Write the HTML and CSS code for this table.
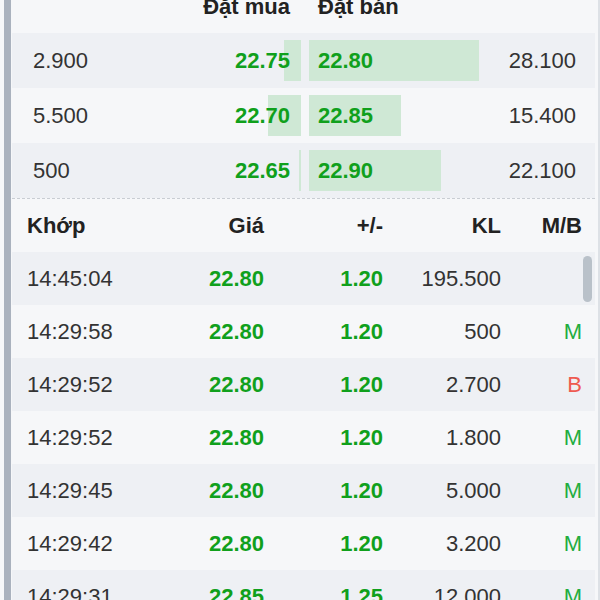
FILE: index.html
```html
<!DOCTYPE html>
<html lang="vi">
<head>
  <meta charset="UTF-8">
  <meta name="viewport" content="width=device-width, initial-scale=1.0">
  <title>Sổ lệnh và khớp lệnh</title>
  <link rel="stylesheet" href="styles.css">
</head>
<body>
  <div class="panel">
    <!-- Order book -->
    <div class="book">
      <div class="book-head">
        <div></div>
        <div class="buy">Đặt mua</div>
        <div class="sell">Đặt bán</div>
        <div></div>
      </div>

      <div class="book-row">
        <div class="vol-left">2.900</div>
        <div class="buy"><span class="bar" style="width: 17px"></span><span class="price">22.75</span></div>
        <div class="sell"><span class="bar" style="width: 170px"></span><span class="price">22.80</span></div>
        <div class="vol-right">28.100</div>
      </div>

      <div class="book-row">
        <div class="vol-left">5.500</div>
        <div class="buy"><span class="bar" style="width: 33px"></span><span class="price">22.70</span></div>
        <div class="sell"><span class="bar" style="width: 92px"></span><span class="price">22.85</span></div>
        <div class="vol-right">15.400</div>
      </div>

      <div class="book-row">
        <div class="vol-left">500</div>
        <div class="buy"><span class="bar" style="width: 2px"></span><span class="price">22.65</span></div>
        <div class="sell"><span class="bar" style="width: 132px"></span><span class="price">22.90</span></div>
        <div class="vol-right">22.100</div>
      </div>
    </div>

    <!-- Matched trades -->
    <div class="trades">
      <div class="trade-head">
        <div class="time">Khớp</div>
        <div>Giá</div>
        <div>+/-</div>
        <div>KL</div>
        <div>M/B</div>
      </div>

      <div class="trade-list">
        <div class="thumb"></div>

        <div class="trade-row">
          <div class="time">14:45:04</div>
          <div class="up">22.80</div>
          <div class="up">1.20</div>
          <div>195.500</div>
          <div></div>
        </div>
        <div class="trade-row">
          <div class="time">14:29:58</div>
          <div class="up">22.80</div>
          <div class="up">1.20</div>
          <div>500</div>
          <div class="side-m">M</div>
        </div>
        <div class="trade-row">
          <div class="time">14:29:52</div>
          <div class="up">22.80</div>
          <div class="up">1.20</div>
          <div>2.700</div>
          <div class="side-b">B</div>
        </div>
        <div class="trade-row">
          <div class="time">14:29:52</div>
          <div class="up">22.80</div>
          <div class="up">1.20</div>
          <div>1.800</div>
          <div class="side-m">M</div>
        </div>
        <div class="trade-row">
          <div class="time">14:29:45</div>
          <div class="up">22.80</div>
          <div class="up">1.20</div>
          <div>5.000</div>
          <div class="side-m">M</div>
        </div>
        <div class="trade-row">
          <div class="time">14:29:42</div>
          <div class="up">22.80</div>
          <div class="up">1.20</div>
          <div>3.200</div>
          <div class="side-m">M</div>
        </div>
        <div class="trade-row">
          <div class="time">14:29:31</div>
          <div class="up">22.85</div>
          <div class="up">1.25</div>
          <div>12.000</div>
          <div class="side-m">M</div>
        </div>
      </div>
    </div>
  </div>
</body>
</html>
```

FILE: styles.css
```css
html, body {
  height: 100%;
  overflow: hidden;
}

body {
  margin: 0;
  background-color: #f6f7f9;
  font-family: "Liberation Sans", Arial, sans-serif;
  font-size: 22px;
  color: #333;
  border-right: 2px solid #dde1e6;
  box-sizing: border-box;
}

.panel {
  margin: -20px 3px 0 4px;
  border-left: 7px solid #aab2be;
  padding-left: 1px;
  background-color: #f6f7f9;
}

/* Order book */
.book-head,
.book-row {
  display: grid;
  grid-template-columns: 148px 141px 194px 100px;
}

.book-head {
  height: 53px;
  align-items: center;
  font-weight: bold;
  color: #222;
}

.book-head .buy {
  text-align: right;
  padding-right: 11px;
}

.book-head .sell {
  padding-left: 17px;
}

.book-row {
  height: 55px;
  align-items: center;
}

.book-row:nth-child(even) {
  background-color: #eef0f4;
}

.book-row .buy,
.book-row .sell {
  position: relative;
  height: 41px;
  display: flex;
  align-items: center;
}

.book-row .buy {
  justify-content: flex-end;
  padding-right: 11px;
}

.book-row .sell {
  margin-left: 8px;
  padding-left: 9px;
}

.bar {
  position: absolute;
  top: 0;
  bottom: 0;
  background-color: #cfe8d5;
}

.buy .bar {
  right: 0;
}

.sell .bar {
  left: 0;
}

.price {
  position: relative;
  font-weight: bold;
  color: #10a01c;
}

.vol-left {
  padding-left: 21px;
}

.vol-right {
  text-align: right;
  padding-right: 19px;
}

/* Trades */
.trades {
  border-top: 1px dashed #c9cdd3;
}

.trade-head,
.trade-row {
  display: grid;
  grid-template-columns: 138px 114px 119px 118px 81px;
  align-items: center;
  text-align: right;
}

.trade-head {
  height: 53px;
  font-weight: bold;
  color: #222;
}

.time {
  text-align: left;
  padding-left: 15px;
}

.trade-list {
  position: relative;
}

.trade-row {
  height: 53px;
}

.trade-row:nth-child(even) {
  background-color: #eef0f4;
}

.up {
  font-weight: bold;
  color: #10a01c;
}

.side-m {
  color: #23ad3f;
}

.side-b {
  color: #ee5a50;
}

.thumb {
  position: absolute;
  top: 4px;
  right: 3px;
  width: 9px;
  height: 46px;
  border-radius: 5px;
  background-color: #b9c1c9;
  z-index: 1;
}
```
